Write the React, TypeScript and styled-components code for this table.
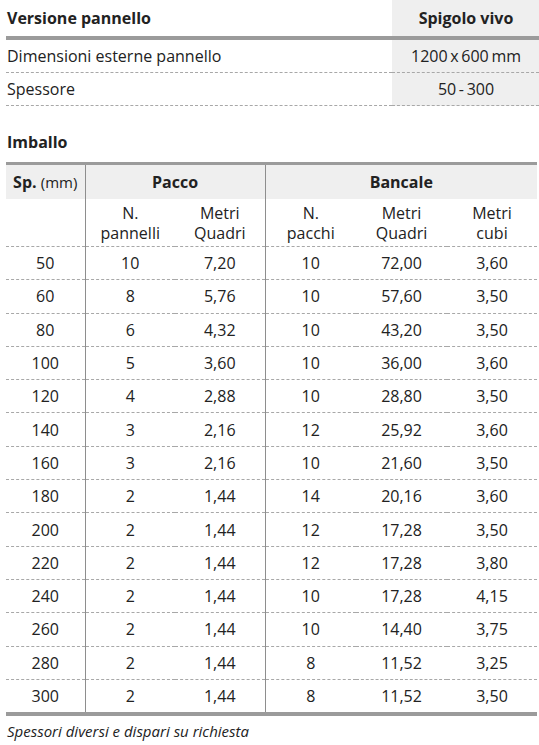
import React from 'react';
import styled, { createGlobalStyle } from 'styled-components';

const GlobalStyle = createGlobalStyle`
  html, body {
    margin: 0;
    padding: 0;
    background: #ffffff;
  }
  body {
    font-family: 'Open Sans', 'Liberation Sans', sans-serif;
    color: #222222;
  }
`;

const THICK = '#9b9b9b';
const DASH = '#a8a8a8';
const RULE = '#8e8e8e';
const SHADE = '#efefef';

const Page = styled.div`
  width: 539px;
  padding-left: 6px;
  box-sizing: border-box;
`;

const SpecTable = styled.table`
  width: 533px;
  border-collapse: collapse;
  table-layout: fixed;
  font-size: 16px;
`;

const SpecHeadCell = styled.th<{ $value?: boolean }>`
  height: 36px;
  padding: 0 0 0 1px;
  font-weight: 700;
  text-align: ${(p) => (p.$value ? 'center' : 'left')};
  background: ${(p) => (p.$value ? SHADE : 'transparent')};
  border-bottom: 4px solid ${THICK};
  vertical-align: middle;
`;

const SpecCell = styled.td<{ $value?: boolean }>`
  height: 32px;
  padding: 0 0 0 1px;
  text-align: ${(p) => (p.$value ? 'center' : 'left')};
  background: ${(p) => (p.$value ? SHADE : 'transparent')};
  border-bottom: 1px dashed ${DASH};
  vertical-align: middle;
`;

const SectionTitle = styled.h3`
  margin: 0;
  padding: 0 0 0 1px;
  height: 55px;
  display: flex;
  align-items: flex-end;
  font-size: 16px;
  font-weight: 700;
  line-height: 20px;
  padding-bottom: 10px;
  box-sizing: border-box;
  margin-top: 1px;
`;

const PackTable = styled.table`
  width: 531px;
  border-collapse: collapse;
  table-layout: fixed;
  font-size: 16px;
  border-top: 3px solid ${THICK};
  border-bottom: 4px solid ${THICK};
`;

const GroupCell = styled.th<{ $divider?: boolean }>`
  height: 34px;
  padding: 0;
  font-weight: 700;
  text-align: center;
  background: ${SHADE};
  border-right: ${(p) => (p.$divider ? `1px solid ${RULE}` : 'none')};
  vertical-align: middle;
`;

const Unit = styled.span`
  font-weight: 400;
  font-size: 15px;
`;

const SubHeadCell = styled.th<{ $divider?: boolean }>`
  height: 47px;
  padding: 0;
  font-weight: 400;
  line-height: 20px;
  text-align: center;
  border-right: ${(p) => (p.$divider ? `1px solid ${RULE}` : 'none')};
  border-bottom: 1px dashed ${DASH};
  vertical-align: middle;
`;

const DataRow = styled.tr<{ $last?: boolean }>`
  & > td {
    border-bottom: ${(p) => (p.$last ? 'none' : `1px dashed ${DASH}`)};
  }
`;

const DataCell = styled.td<{ $divider?: boolean }>`
  height: 32.3px;
  padding: 0;
  text-align: center;
  vertical-align: middle;
  border-right: ${(p) => (p.$divider ? `1px solid ${RULE}` : 'none')};
`;

const Note = styled.p`
  margin: 0;
  padding: 5px 0 0 1px;
  font-size: 15px;
  font-style: italic;
  line-height: 20px;
`;

const rows: [string, string, string, string, string, string][] = [
  ['50', '10', '7,20', '10', '72,00', '3,60'],
  ['60', '8', '5,76', '10', '57,60', '3,50'],
  ['80', '6', '4,32', '10', '43,20', '3,50'],
  ['100', '5', '3,60', '10', '36,00', '3,60'],
  ['120', '4', '2,88', '10', '28,80', '3,50'],
  ['140', '3', '2,16', '12', '25,92', '3,60'],
  ['160', '3', '2,16', '10', '21,60', '3,50'],
  ['180', '2', '1,44', '14', '20,16', '3,60'],
  ['200', '2', '1,44', '12', '17,28', '3,50'],
  ['220', '2', '1,44', '12', '17,28', '3,80'],
  ['240', '2', '1,44', '10', '17,28', '4,15'],
  ['260', '2', '1,44', '10', '14,40', '3,75'],
  ['280', '2', '1,44', '8', '11,52', '3,25'],
  ['300', '2', '1,44', '8', '11,52', '3,50'],
];

export default function App() {
  return (
    <Page>
      <GlobalStyle />
      <SpecTable>
        <colgroup>
          <col style={{ width: 386 }} />
          <col style={{ width: 147 }} />
        </colgroup>
        <thead>
          <tr>
            <SpecHeadCell>Versione pannello</SpecHeadCell>
            <SpecHeadCell $value>Spigolo vivo</SpecHeadCell>
          </tr>
        </thead>
        <tbody>
          <tr>
            <SpecCell>Dimensioni esterne pannello</SpecCell>
            <SpecCell $value>1200{'\u2009'}x{'\u2009'}600{'\u2009'}mm</SpecCell>
          </tr>
          <tr>
            <SpecCell>Spessore</SpecCell>
            <SpecCell $value>50{'\u2009'}-{'\u2009'}300</SpecCell>
          </tr>
        </tbody>
      </SpecTable>

      <SectionTitle>Imballo</SectionTitle>

      <PackTable>
        <colgroup>
          <col style={{ width: 79 }} />
          <col style={{ width: 90 }} />
          <col style={{ width: 90 }} />
          <col style={{ width: 91 }} />
          <col style={{ width: 91 }} />
          <col style={{ width: 90 }} />
        </colgroup>
        <thead>
          <tr>
            <GroupCell $divider>
              Sp. <Unit>(mm)</Unit>
            </GroupCell>
            <GroupCell colSpan={2} $divider>
              Pacco
            </GroupCell>
            <GroupCell colSpan={3}>Bancale</GroupCell>
          </tr>
          <tr>
            <SubHeadCell $divider />
            <SubHeadCell>
              N.
              <br />
              pannelli
            </SubHeadCell>
            <SubHeadCell $divider>
              Metri
              <br />
              Quadri
            </SubHeadCell>
            <SubHeadCell>
              N.
              <br />
              pacchi
            </SubHeadCell>
            <SubHeadCell>
              Metri
              <br />
              Quadri
            </SubHeadCell>
            <SubHeadCell>
              Metri
              <br />
              cubi
            </SubHeadCell>
          </tr>
        </thead>
        <tbody>
          {rows.map((r, i) => (
            <DataRow key={r[0]} $last={i === rows.length - 1}>
              <DataCell $divider>{r[0]}</DataCell>
              <DataCell>{r[1]}</DataCell>
              <DataCell $divider>{r[2]}</DataCell>
              <DataCell>{r[3]}</DataCell>
              <DataCell>{r[4]}</DataCell>
              <DataCell>{r[5]}</DataCell>
            </DataRow>
          ))}
        </tbody>
      </PackTable>

      <Note>Spessori diversi e dispari su richiesta</Note>
    </Page>
  );
}
